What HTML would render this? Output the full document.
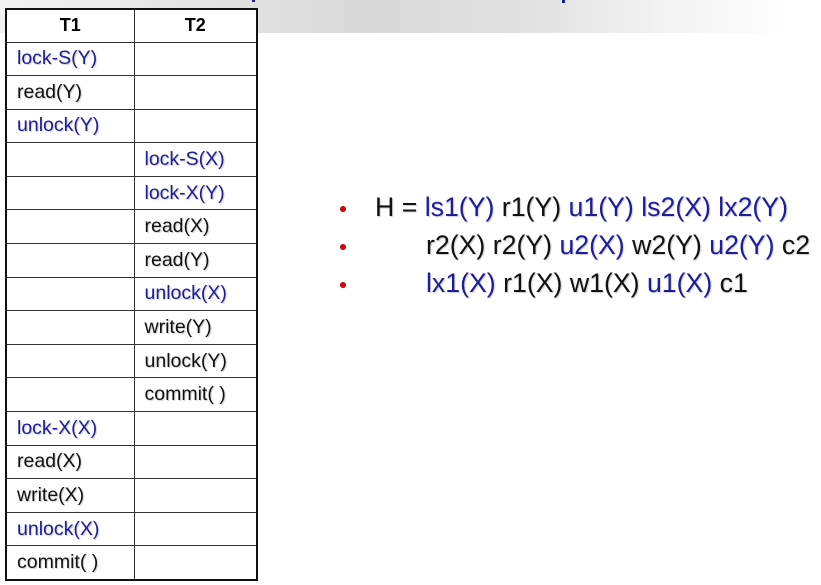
<!DOCTYPE html>
<html><head><style>
body{margin:0;width:821px;height:585px;background:#fff;position:relative;overflow:hidden;font-family:"Liberation Sans",Arial,sans-serif}
.band{position:absolute;left:0;top:0;width:821px;height:33px;background:linear-gradient(to right,#f2f2f2 0%,#e6e6e6 20%,#d9d9d9 45%,#e2e2e2 65%,#f2f2f2 80%,#ffffff 97%)}
table{position:absolute;left:5px;top:8px;border-collapse:collapse;border:2px solid #111}
td{border:1px solid #333;height:33.6px;padding:0 0 0 10px;font-size:19.5px;color:#111;box-sizing:border-box;text-shadow:1px 1px 1px #ccc;white-space:nowrap}
th{border:1px solid #333;height:33px;font-size:18px;font-weight:bold;background:#fff;padding:0;box-sizing:border-box}
.b{color:#1c1c9c}
.h{position:absolute;font-size:26.7px;color:#111;white-space:nowrap;text-shadow:1px 1px 1px #ccc}
.dot{position:absolute;width:6px;height:6px;border-radius:50%;background:#c00}
</style></head><body>
<div class="band"></div>
<div style="position:absolute;left:252px;top:0;width:3px;height:2px;background:#1c1c9c"></div>
<div style="position:absolute;left:562px;top:0;width:3px;height:3px;background:#1c1c9c"></div>
<table>
<tr><th style="width:128px">T1</th><th style="width:123px">T2</th></tr>
<tr><td class="b">lock-S(Y)</td><td></td></tr>
<tr><td>read(Y)</td><td></td></tr>
<tr><td class="b">unlock(Y)</td><td></td></tr>
<tr><td></td><td class="b">lock-S(X)</td></tr>
<tr><td></td><td class="b">lock-X(Y)</td></tr>
<tr><td></td><td>read(X)</td></tr>
<tr><td></td><td>read(Y)</td></tr>
<tr><td></td><td class="b">unlock(X)</td></tr>
<tr><td></td><td>write(Y)</td></tr>
<tr><td></td><td>unlock(Y)</td></tr>
<tr><td></td><td>commit( )</td></tr>
<tr><td class="b">lock-X(X)</td><td></td></tr>
<tr><td>read(X)</td><td></td></tr>
<tr><td>write(X)</td><td></td></tr>
<tr><td class="b">unlock(X)</td><td></td></tr>
<tr><td>commit( )</td><td></td></tr>
</table>
<div class="dot" style="left:340px;top:206px"></div>
<div class="dot" style="left:340px;top:244px"></div>
<div class="dot" style="left:340px;top:282px"></div>
<div class="h" style="left:375px;top:192px">H = <span class="b">ls1(Y)</span> r1(Y) <span class="b">u1(Y) ls2(X) lx2(Y)</span></div>
<div class="h" style="left:426px;top:230px">r2(X) r2(Y) <span class="b">u2(X)</span> w2(Y) <span class="b">u2(Y)</span> c2</div>
<div class="h" style="left:426px;top:268px"><span class="b">lx1(X)</span> r1(X) w1(X) <span class="b">u1(X)</span> c1</div>
</body></html>
